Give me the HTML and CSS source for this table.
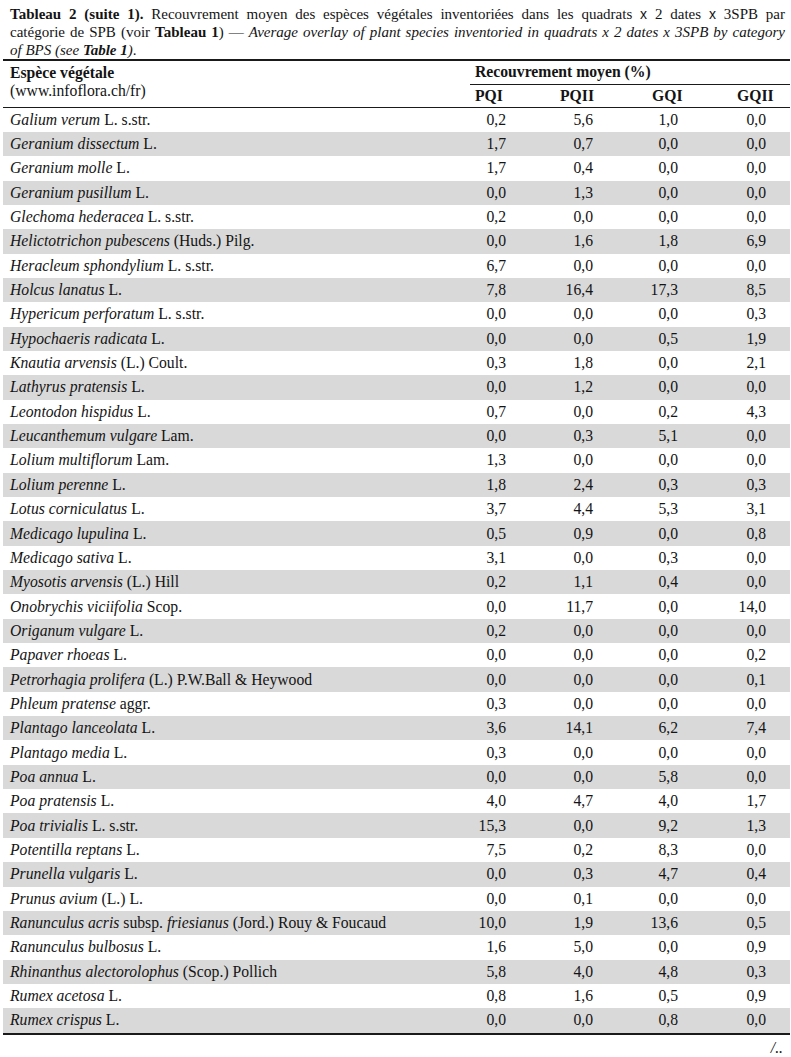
FILE: index.html
```html
<!DOCTYPE html>
<html lang="fr">
<head>
<meta charset="utf-8">
<title>Tableau 2 (suite 1)</title>
<link rel="stylesheet" href="styles.css">
</head>
<body>
<div class="page">
  <p class="caption"><span class="line"><b>Tableau 2 (suite 1).</b> Recouvrement moyen des espèces végétales inventoriées dans les quadrats <span class="x">x</span> 2 dates <span class="x">x</span> 3SPB par</span><span class="line">catégorie de SPB (voir <b>Tableau 1</b>) — <i>Average overlay of plant species inventoried in quadrats x 2 dates x 3SPB by category</i></span><span class="last"><i>of BPS (see <b>Table 1</b>)</i>.</span></p>
  <table class="data">
    <colgroup>
      <col class="c-name"><col class="c-pqi"><col class="c-pqii"><col class="c-gqi"><col class="c-gqii">
    </colgroup>
    <thead>
      <tr class="h1">
        <th rowspan="2" class="h-name"><b>Espèce végétale</b><br><span class="src">(www.infoflora.ch/fr)</span></th>
        <th colspan="4" class="h-group">Recouvrement moyen (%)</th>
      </tr>
      <tr class="h2">
        <th class="h-pqi">PQI</th>
        <th class="h-pqii">PQII</th>
        <th class="h-gqi">GQI</th>
        <th class="h-gqii">GQII</th>
      </tr>
    </thead>
    <tbody>
      <tr><td><i>Galium verum</i> L. s.str.</td><td>0,2</td><td>5,6</td><td>1,0</td><td>0,0</td></tr>
      <tr><td><i>Geranium dissectum</i> L.</td><td>1,7</td><td>0,7</td><td>0,0</td><td>0,0</td></tr>
      <tr><td><i>Geranium molle</i> L.</td><td>1,7</td><td>0,4</td><td>0,0</td><td>0,0</td></tr>
      <tr><td><i>Geranium pusillum</i> L.</td><td>0,0</td><td>1,3</td><td>0,0</td><td>0,0</td></tr>
      <tr><td><i>Glechoma hederacea</i> L. s.str.</td><td>0,2</td><td>0,0</td><td>0,0</td><td>0,0</td></tr>
      <tr><td><i>Helictotrichon pubescens</i> (Huds.) Pilg.</td><td>0,0</td><td>1,6</td><td>1,8</td><td>6,9</td></tr>
      <tr><td><i>Heracleum sphondylium</i> L. s.str.</td><td>6,7</td><td>0,0</td><td>0,0</td><td>0,0</td></tr>
      <tr><td><i>Holcus lanatus</i> L.</td><td>7,8</td><td>16,4</td><td>17,3</td><td>8,5</td></tr>
      <tr><td><i>Hypericum perforatum</i> L. s.str.</td><td>0,0</td><td>0,0</td><td>0,0</td><td>0,3</td></tr>
      <tr><td><i>Hypochaeris radicata</i> L.</td><td>0,0</td><td>0,0</td><td>0,5</td><td>1,9</td></tr>
      <tr><td><i>Knautia arvensis</i> (L.) Coult.</td><td>0,3</td><td>1,8</td><td>0,0</td><td>2,1</td></tr>
      <tr><td><i>Lathyrus pratensis</i> L.</td><td>0,0</td><td>1,2</td><td>0,0</td><td>0,0</td></tr>
      <tr><td><i>Leontodon hispidus</i> L.</td><td>0,7</td><td>0,0</td><td>0,2</td><td>4,3</td></tr>
      <tr><td><i>Leucanthemum vulgare</i> Lam.</td><td>0,0</td><td>0,3</td><td>5,1</td><td>0,0</td></tr>
      <tr><td><i>Lolium multiflorum</i> Lam.</td><td>1,3</td><td>0,0</td><td>0,0</td><td>0,0</td></tr>
      <tr><td><i>Lolium perenne</i> L.</td><td>1,8</td><td>2,4</td><td>0,3</td><td>0,3</td></tr>
      <tr><td><i>Lotus corniculatus</i> L.</td><td>3,7</td><td>4,4</td><td>5,3</td><td>3,1</td></tr>
      <tr><td><i>Medicago lupulina</i> L.</td><td>0,5</td><td>0,9</td><td>0,0</td><td>0,8</td></tr>
      <tr><td><i>Medicago sativa</i> L.</td><td>3,1</td><td>0,0</td><td>0,3</td><td>0,0</td></tr>
      <tr><td><i>Myosotis arvensis</i> (L.) Hill</td><td>0,2</td><td>1,1</td><td>0,4</td><td>0,0</td></tr>
      <tr><td><i>Onobrychis viciifolia</i> Scop.</td><td>0,0</td><td>11,7</td><td>0,0</td><td>14,0</td></tr>
      <tr><td><i>Origanum vulgare</i> L.</td><td>0,2</td><td>0,0</td><td>0,0</td><td>0,0</td></tr>
      <tr><td><i>Papaver rhoeas</i> L.</td><td>0,0</td><td>0,0</td><td>0,0</td><td>0,2</td></tr>
      <tr><td><i>Petrorhagia prolifera</i> (L.) P.W.Ball &amp; Heywood</td><td>0,0</td><td>0,0</td><td>0,0</td><td>0,1</td></tr>
      <tr><td><i>Phleum pratense</i> aggr.</td><td>0,3</td><td>0,0</td><td>0,0</td><td>0,0</td></tr>
      <tr><td><i>Plantago lanceolata</i> L.</td><td>3,6</td><td>14,1</td><td>6,2</td><td>7,4</td></tr>
      <tr><td><i>Plantago media</i> L.</td><td>0,3</td><td>0,0</td><td>0,0</td><td>0,0</td></tr>
      <tr><td><i>Poa annua</i> L.</td><td>0,0</td><td>0,0</td><td>5,8</td><td>0,0</td></tr>
      <tr><td><i>Poa pratensis</i> L.</td><td>4,0</td><td>4,7</td><td>4,0</td><td>1,7</td></tr>
      <tr><td><i>Poa trivialis</i> L. s.str.</td><td>15,3</td><td>0,0</td><td>9,2</td><td>1,3</td></tr>
      <tr><td><i>Potentilla reptans</i> L.</td><td>7,5</td><td>0,2</td><td>8,3</td><td>0,0</td></tr>
      <tr><td><i>Prunella vulgaris</i> L.</td><td>0,0</td><td>0,3</td><td>4,7</td><td>0,4</td></tr>
      <tr><td><i>Prunus avium</i> (L.) L.</td><td>0,0</td><td>0,1</td><td>0,0</td><td>0,0</td></tr>
      <tr><td><i>Ranunculus acris</i> subsp. <i>friesianus</i> (Jord.) Rouy &amp; Foucaud</td><td>10,0</td><td>1,9</td><td>13,6</td><td>0,5</td></tr>
      <tr><td><i>Ranunculus bulbosus</i> L.</td><td>1,6</td><td>5,0</td><td>0,0</td><td>0,9</td></tr>
      <tr><td><i>Rhinanthus alectorolophus</i> (Scop.) Pollich</td><td>5,8</td><td>4,0</td><td>4,8</td><td>0,3</td></tr>
      <tr><td><i>Rumex acetosa</i> L.</td><td>0,8</td><td>1,6</td><td>0,5</td><td>0,9</td></tr>
      <tr><td><i>Rumex crispus</i> L.</td><td>0,0</td><td>0,0</td><td>0,8</td><td>0,0</td></tr>
    </tbody>
  </table>
  <p class="cont"><i>/..</i></p>
</div>
</body>
</html>
```

FILE: styles.css
```css
html, body {
  margin: 0;
  padding: 0;
  background: #fff;
}

body {
  font-family: "Liberation Serif", "Times New Roman", serif;
  font-size: 15.7px;
  color: #141414;
}

.page {
  width: 791px;
}

.caption {
  margin: 0;
  padding: 5px 6px 0 10px;
  font-size: 15px;
  line-height: 18px;
}

.caption .line {
  display: block;
  text-align: justify;
  text-align-last: justify;
  white-space: nowrap;
}

.caption .last {
  display: block;
  text-align: left;
}

.caption .x {
  font-family: "Liberation Sans", Arial, sans-serif;
  font-size: 14px;
  font-style: normal;
}

.data {
  margin-left: 3px;
  width: 787px;
  border-collapse: collapse;
  table-layout: fixed;
  border-top: 2px solid #1a1a1a;
  border-bottom: 2px solid #1a1a1a;
}

.c-name { width: 467px; }
.c-pqi { width: 70px; }
.c-pqii { width: 85px; }
.c-gqi { width: 85px; }
.c-gqii { width: 80px; }

.data th {
  font-weight: bold;
  text-align: left;
  line-height: 18px;
  padding: 0;
}

.h-name {
  vertical-align: top;
  padding: 3px 0 0 7px !important;
}

.h-name .src {
  font-weight: normal;
}

.h1 {
  height: 24px;
}

.h-group {
  padding-left: 5px !important;
  border-bottom: 1px solid #1a1a1a;
  vertical-align: middle;
}

.h2 {
  height: 23px;
}

.h2 th {
  vertical-align: middle;
}

.h-pqi { padding-left: 5px !important; }
.h-pqii { padding-left: 20px !important; }
.h-gqi { padding-left: 27px !important; }
.h-gqii { padding-left: 27px !important; }

.data thead {
  border-bottom: 1px solid #1a1a1a;
}

.data tbody td {
  height: 24.35px;
  line-height: 18px;
  padding: 0;
  vertical-align: middle;
  text-align: right;
  white-space: nowrap;
}

.data tbody tr:nth-child(even) {
  background: #d9d9d9;
}

.data tbody td:nth-child(1) {
  text-align: left;
  padding-left: 7px;
}

.data tbody td:nth-child(2) { padding-right: 34px; }
.data tbody td:nth-child(3) { padding-right: 32px; }
.data tbody td:nth-child(4) { padding-right: 32px; }
.data tbody td:nth-child(5) { padding-right: 24px; }

.cont {
  margin: 0;
  padding: 4px 8px 0 0;
  text-align: right;
  line-height: 18px;
}
```
